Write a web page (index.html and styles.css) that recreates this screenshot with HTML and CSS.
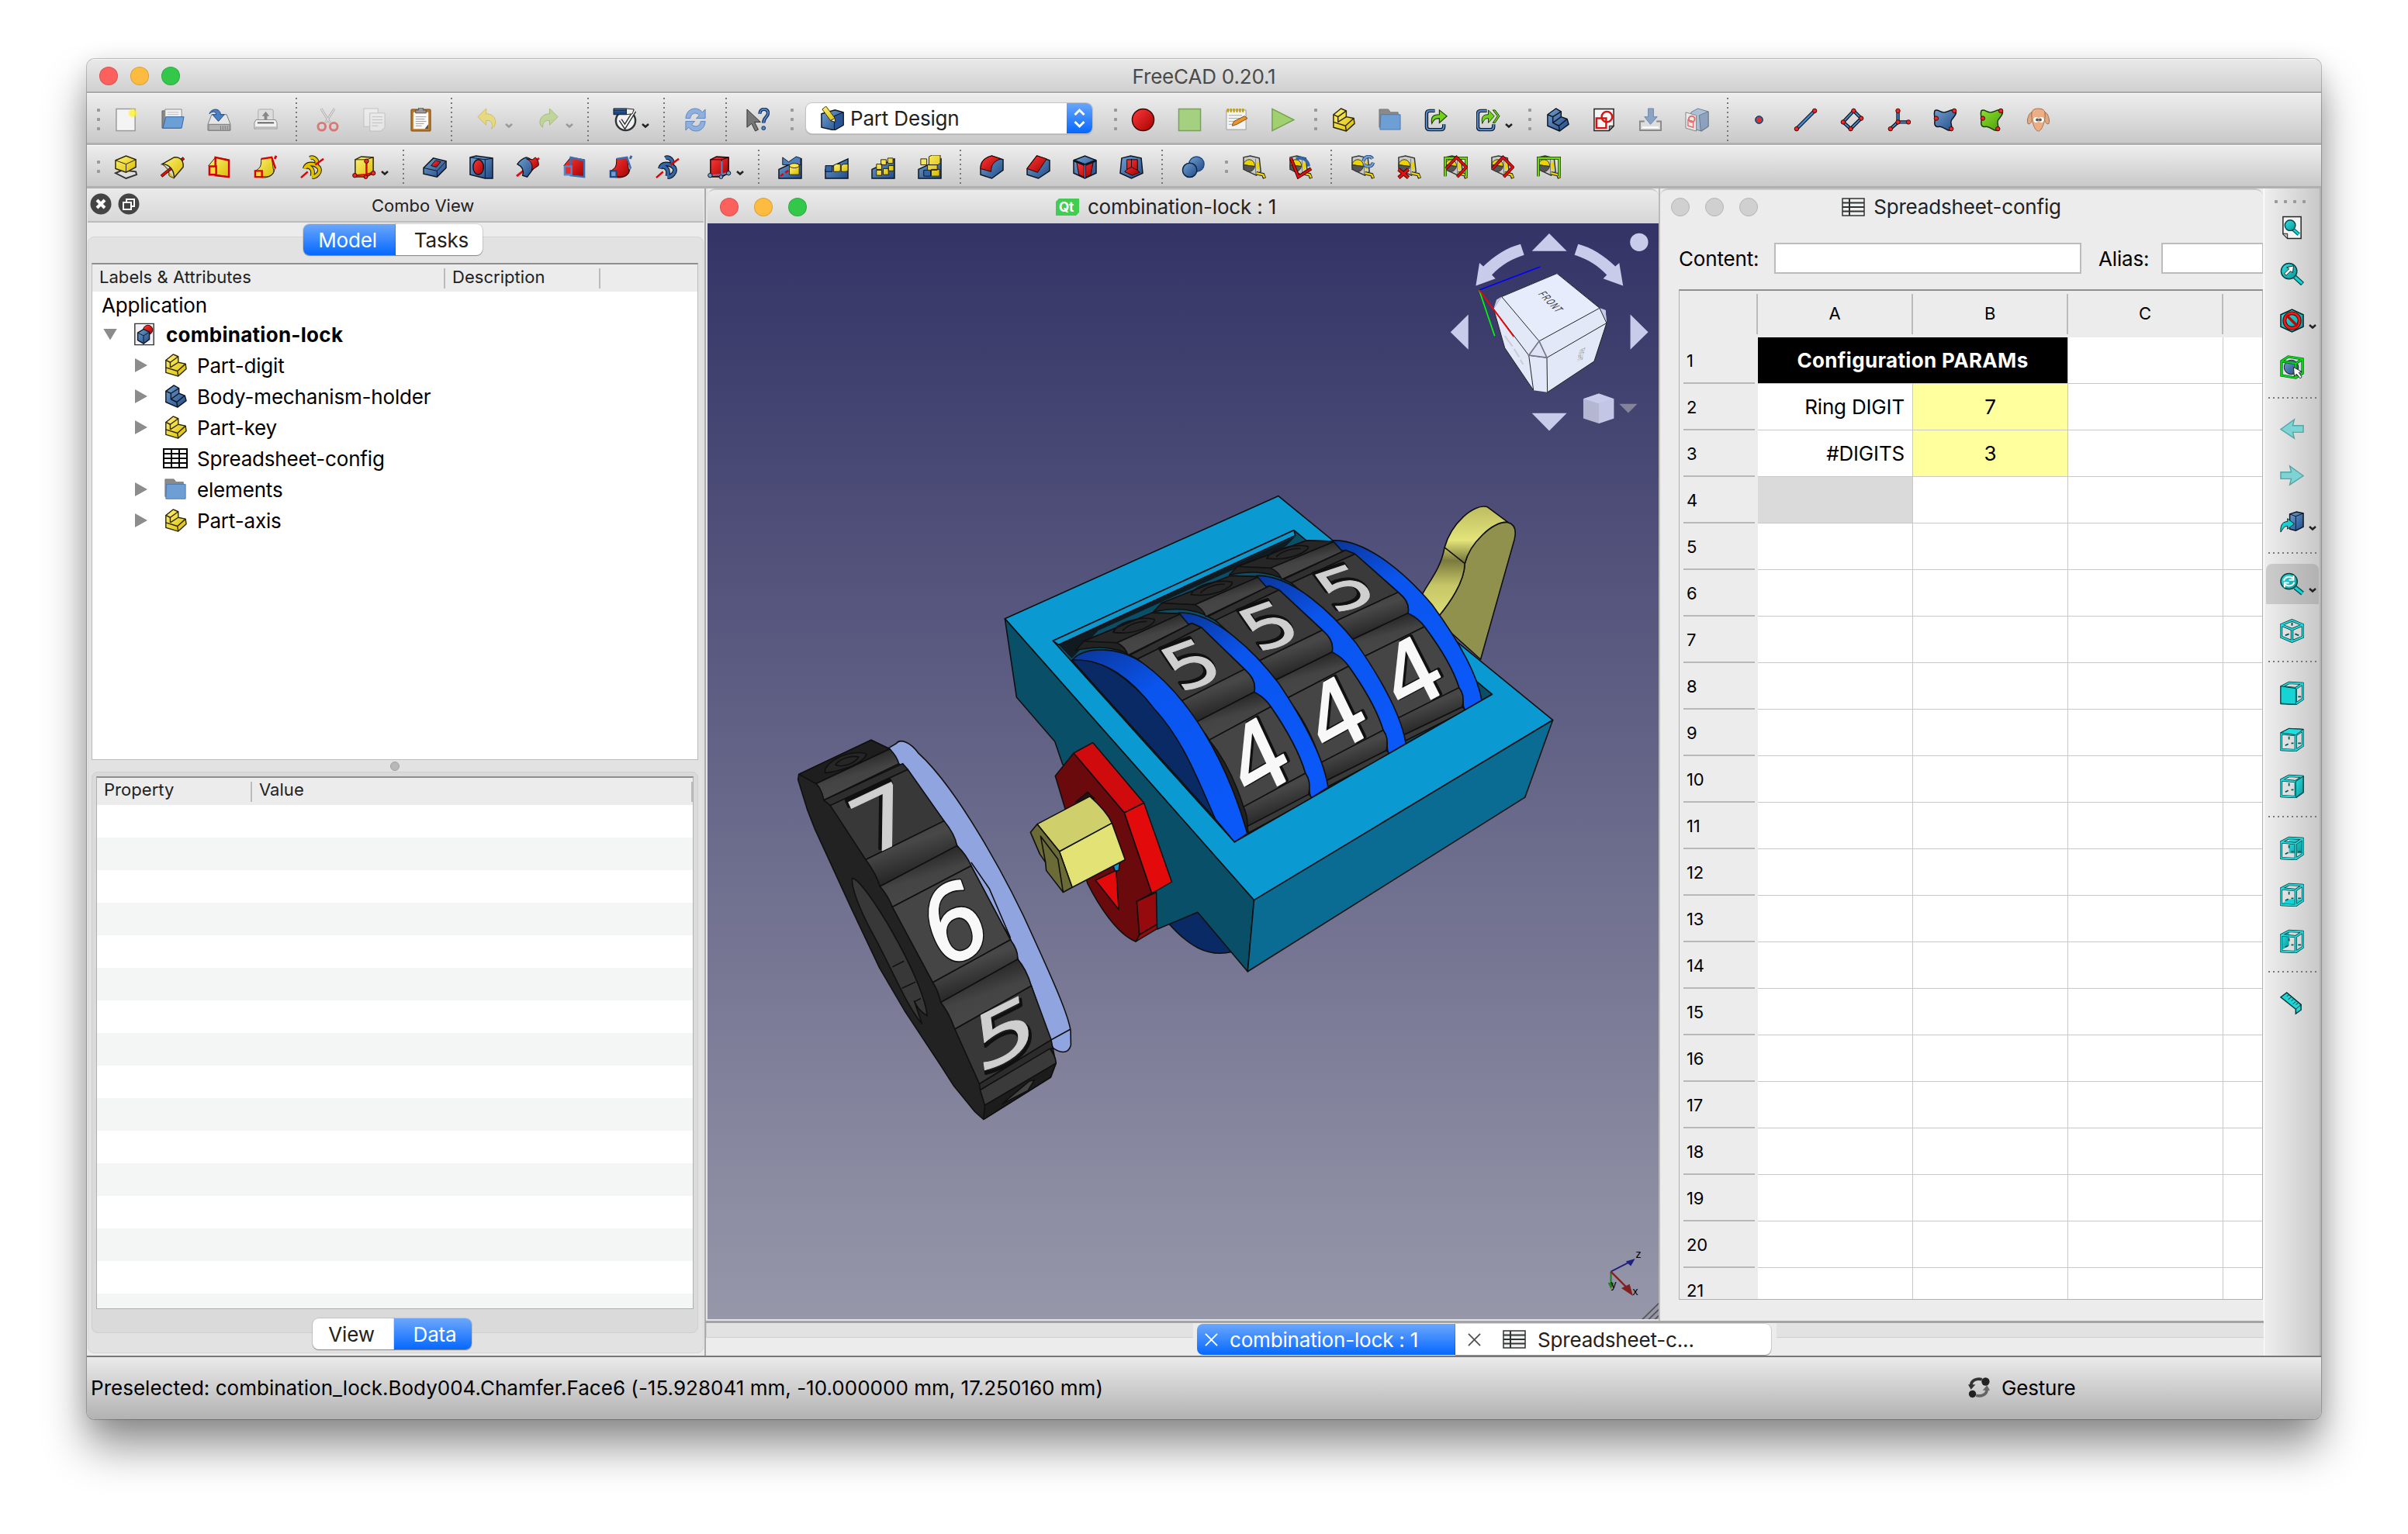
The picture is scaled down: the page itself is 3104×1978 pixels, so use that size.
FILE: index.html
```html
<!DOCTYPE html>
<html lang="en">
<head>
<meta charset="utf-8">
<title>FreeCAD 0.20.1</title>
<link rel="stylesheet" href="styles.css">
</head>
<body>
<svg class="defs" width="0" height="0" aria-hidden="true">
<defs>
<linearGradient id="gy" x1="0" y1="0" x2="1" y2="1"><stop offset="0" stop-color="#fff27a"/><stop offset="1" stop-color="#d9bd00"/></linearGradient>
<linearGradient id="gb" x1="0" y1="0" x2="1" y2="1"><stop offset="0" stop-color="#729fcf"/><stop offset="1" stop-color="#204a87"/></linearGradient>
<linearGradient id="gr" x1="0" y1="0" x2="1" y2="1"><stop offset="0" stop-color="#ff3a3a"/><stop offset="1" stop-color="#a40000"/></linearGradient>
<linearGradient id="gg" x1="0" y1="0" x2="1" y2="1"><stop offset="0" stop-color="#8ae234"/><stop offset="1" stop-color="#4e9a06"/></linearGradient>
<linearGradient id="gc" x1="0" y1="0" x2="1" y2="1"><stop offset="0" stop-color="#34e0e2"/><stop offset="1" stop-color="#06989a"/></linearGradient>
<radialGradient id="glow"><stop offset="0" stop-color="#fff84a"/><stop offset=".5" stop-color="#fff02a" stop-opacity=".8"/><stop offset="1" stop-color="#fff02a" stop-opacity="0"/></radialGradient>
<linearGradient id="cylA" x1="0" y1="0" x2=".45" y2="1"><stop offset="0" stop-color="#3a3a3a"/><stop offset=".45" stop-color="#484848"/><stop offset="1" stop-color="#1c1c1c"/></linearGradient>
<linearGradient id="cylB" x1="0" y1="0" x2=".45" y2="1"><stop offset=".2" stop-color="#1e1e1e"/><stop offset=".6" stop-color="#444"/><stop offset="1" stop-color="#484848"/></linearGradient>
<linearGradient id="rim" x1="0" y1="0" x2=".6" y2="1"><stop offset="0" stop-color="#0a3596"/><stop offset=".35" stop-color="#0a55ee"/><stop offset="1" stop-color="#0a58f8"/></linearGradient>
<linearGradient id="lever" x1="0" y1="0" x2="0" y2="1"><stop offset="0" stop-color="#bcbc62"/><stop offset=".3" stop-color="#e4e47a"/><stop offset=".48" stop-color="#7a7a3e"/><stop offset=".7" stop-color="#c6c668"/><stop offset="1" stop-color="#e0e078"/></linearGradient>

<symbol id="new" viewBox="0 0 32 32"><rect x="3" y="1.500" width="25" height="29" fill="#f4f4f4" stroke="#999" stroke-width="1.500"/><circle cx="25" cy="7" r="7" fill="url(#glow)"/></symbol>
<symbol id="open" viewBox="0 0 32 32"><path d="M2 4h8l3 3h13v20H2z" fill="#888" stroke="#666"/><path d="M6 2h22v14H6z" fill="#f2f2f2" stroke="#888"/><path d="M9 6h15M9 9h15" stroke="#bbb" fill="none"/><path d="M7 12h24l-3 15H3z" fill="#6b9fd8" stroke="#3465a4"/></symbol>
<symbol id="save" viewBox="0 0 32 32"><path d="M6 9h20l5 13v8H1v-8z" fill="#e6e6e6" stroke="#777"/><path d="M2 22h28v8H2z" fill="#b5b5b5" stroke="#777"/><path d="M18 24v5M21 24v5M24 24v5M27 24v5" stroke="#777"/><path d="M3 8C5 1 17-1 18 9h5l-8 9-8-9h5C12 5 7 4 3 8z" fill="#4a7fc0" stroke="#204a87"/></symbol>
<symbol id="print" viewBox="0 0 32 32"><rect x="6" y="2" width="20" height="15" rx="2" fill="#ddd" stroke="#aaa"/><path d="M16 5l5 6h-3v5h-4v-5h-3z" fill="#888"/><path d="M3 16h26l2 4v8H1v-8z" fill="#f2f2f2" stroke="#888"/><path d="M5 20h22" stroke="#555" stroke-width="2"/><path d="M2 25h28v4H2z" fill="#bbb"/></symbol>
<symbol id="cut" viewBox="0 0 32 32"><g fill="none" opacity=".65"><path d="M7 1l12 19M25 1L13 20" stroke="#999" stroke-width="3"/><path d="M7 1l12 19M25 1L13 20" stroke="#fff"/><ellipse cx="8" cy="25" rx="5" ry="5" stroke="#dd4444" stroke-width="3"/><ellipse cx="24" cy="25" rx="5" ry="5" stroke="#dd4444" stroke-width="3"/></g></symbol>
<symbol id="copy" viewBox="0 0 32 32"><g opacity=".55" fill="#f4f4f4" stroke="#aaa"><path d="M2 1h19v24H2z"/><path d="M10 7h20v19l-5 5H10z"/><path d="M13 12h14M13 16h14M13 20h14M13 24h8" fill="none"/></g></symbol>
<symbol id="paste" viewBox="0 0 32 32"><rect x="3" y="2" width="26" height="29" rx="1" fill="#b5762a" stroke="#7a4a10"/><path d="M6 6h20v22H6z" fill="#fafafa"/><path d="M9 12h14M9 15h12M9 18h14M9 21h11M9 24h8" stroke="#999"/><path d="M21 28l5-6v6z" fill="#555"/><path d="M9 3h4V0h6v3h4v4H9z" fill="#999" stroke="#555"/></symbol>
<symbol id="undo" viewBox="0 0 32 32"><path d="M2 12L13 1v7c14 0 16 15 7 20 3-7 0-12-7-11v6z" fill="#ead96a" stroke="#c9b64c" opacity=".8"/></symbol>
<symbol id="redo" viewBox="0 0 32 32"><path d="M28 12L17 1v7C3 8 1 23 8 26c-1-6 3-10 9-9v6z" fill="#bcd490" stroke="#98b868" opacity=".85"/></symbol>
<symbol id="valid" viewBox="0 0 32 32"><ellipse cx="17" cy="17" rx="13" ry="13" fill="#f2f2f2" stroke="#2e3436" stroke-width="2.500"/><path d="M10 16l6 9L29 4" fill="none" stroke="#2e3436" stroke-width="5"/><path d="M10 16l6 9L29 4" fill="none" stroke="#fff" stroke-width="2"/><path d="M1 1h17v8H1z" fill="#3465a4" stroke="#0b1521"/><path d="M1 4h17M1 7h17" stroke="#0b1521"/><path d="M18 1l10 1-2 6-8 1z" fill="#eee" stroke="#222"/></symbol>
<symbol id="sync" viewBox="0 0 32 32"><g fill="#8fb0dc" stroke="#5d86c0"><path d="M3 14C4-1 20-2 25 6l4-4v12H17l4-4c-4-5-11-3-12 4z"/><path d="M29 18c-1 15-17 16-22 8l-4 4V18h12l-4 4c4 5 11 3 12-4z"/></g></symbol>
<symbol id="whats" viewBox="0 0 32 32"><path d="M2 2v24l6-5 5 10 4-2-5-10h8z" fill="#777" stroke="#333"/><path d="M19 8c0-8 11-8 11-1 0 5-6 6-6 13" fill="none" stroke="#14325c" stroke-width="4.500"/><path d="M19 8c0-8 11-8 11-1 0 5-6 6-6 13" fill="none" stroke="#5588c8" stroke-width="2"/><circle cx="24" cy="27" r="2.500" fill="#5588c8" stroke="#14325c"/></symbol>
<symbol id="pd" viewBox="0 0 32 32"><path d="M2 10l18-5 11 3v17l-12 7-17-4z" fill="url(#gb)" stroke="#0b1521" stroke-width="1.500"/><path d="M19 13l12-5v17l-12 7z" fill="#2a5596" stroke="#0b1521"/><path d="M3 4l5-4 12 16v5l-6-2z" fill="url(#gy)" stroke="#3a3000"/><path d="M14 19l6 2v-5z" fill="#fff" stroke="#222"/></symbol>
<symbol id="rec" viewBox="0 0 32 32"><circle cx="16" cy="16" r="14.500" fill="url(#gr)" stroke="#3a0505" stroke-width="1.500"/></symbol>
<symbol id="stop" viewBox="0 0 32 32"><path d="M1.500 1.500h29v29h-29z" fill="#a5d080" stroke="#7a9e5c" stroke-width="1.500"/></symbol>
<symbol id="note" viewBox="0 0 32 32"><path d="M3 3h26v26H3z" fill="#f4f4f4" stroke="#999"/><path d="M5 1v5M9 1v5M13 1v5M17 1v5M21 1v5M25 1v5" stroke="#c4a000" stroke-width="2.500"/><path d="M6 10h18M6 14h18M6 18h12M6 22h10" stroke="#aaa"/><path d="M11 22l2-4 14-7 4 3-14 8-6 2z" fill="#e8952c" stroke="#7a4a10"/></symbol>
<symbol id="play" viewBox="0 0 32 32"><path d="M2 1.500L31 16 2 30.500z" fill="#a0d070" stroke="#74a24c" stroke-width="1.500"/></symbol>
<symbol id="part" viewBox="0 0 32 32"><g stroke="#2b2500" stroke-width="1.500" stroke-linejoin="round" fill="url(#gy)"><path d="M3 9l10-8 7 3v8l10 2 1 7-11 10-17-5z"/><path d="M3 9l6 3 11-8M9 12v7M3 19l16 5 11-10M19 24l1 7M9 19l11-7" fill="none"/></g></symbol>
<symbol id="body" viewBox="0 0 32 32"><g stroke="#0b1521" stroke-width="1.500" stroke-linejoin="round" fill="url(#gb)"><path d="M3 9l11-8 7 4v7l8 3 2 7-12 9-16-7z"/><path d="M3 9l7 3 11-7M10 12v8l8 4 11-9M18 24l1 7M10 20l11-8" fill="none"/></g></symbol>
<symbol id="folder" viewBox="0 0 32 32"><path d="M2 2h12l3 4h10v20H2z" fill="#8a8a8a" stroke="#777"/><path d="M4 9h26v20H3z" fill="#6d9fd4" stroke="#4a7ab4"/></symbol>
<symbol id="link" viewBox="0 0 32 32"><path d="M14 4H7c-3 0-4 2-4 4v17c0 3 2 4 4 4h15c3 0 4-2 4-4v-3" fill="none" stroke="#0b1521" stroke-width="4.500"/><path d="M14 4H7c-3 0-4 2-4 4v17c0 3 2 4 4 4h15c3 0 4-2 4-4v-3" fill="none" stroke="#5588c8" stroke-width="2.200"/><path d="M10 21C8 11 13 9 20 9V3l10 8-10 9v-6c-5 0-7 1-10 7z" fill="#73d216" stroke="#173a00" stroke-width="1.200"/></symbol>
<symbol id="links" viewBox="0 0 32 32"><path d="M14 4H6C3 4 2 6 2 8v17c0 3 2 4 4 4h13c3 0 4-2 4-4v-3" fill="none" stroke="#0b1521" stroke-width="4.500"/><path d="M14 4H6C3 4 2 6 2 8v17c0 3 2 4 4 4h13c3 0 4-2 4-4v-3" fill="none" stroke="#5588c8" stroke-width="2.200"/><path d="M8 21C6 11 10 9 16 9V3l8 8-8 9v-6c-4 0-5 1-8 7zM22 3h3l6 8-6 9h-3l6-9z" fill="#73d216" stroke="#173a00"/></symbol>
<symbol id="sketch" viewBox="0 0 32 32"><path d="M3 1.500h26v23l-6 6H3z" fill="#f6f6f6" stroke="#222" stroke-width="1.500"/><path d="M23 30v-6h6z" fill="#888" stroke="#222"/><path d="M6 14h13v13H6z" fill="none" stroke="#e01010" stroke-width="2.500"/><circle cx="20" cy="12" r="7" fill="none" stroke="#e01010" stroke-width="2.500"/></symbol>
<symbol id="import" viewBox="0 0 32 32"><path d="M8 18H2v12h28V18h-6" fill="#ddd" stroke="#888" stroke-width="2"/><path d="M5 26h22" stroke="#fff" stroke-width="2"/><path d="M13 1h7v11h5l-9 10-8-10h5z" fill="#8ba4c6" stroke="#6c86aa"/></symbol>
<symbol id="map" viewBox="0 0 32 32"><g opacity=".65"><path d="M8 6l9-5 14 4v20l-9 6-14-4z" fill="#8fb0d8" stroke="#345"/><path d="M19 10l12-5v20l-10 6z" fill="#6485b0" stroke="#345"/><path d="M1 6l14 4v21L1 27z" fill="#f4f4f4" stroke="#555"/><circle cx="9" cy="15" r="4" fill="none" stroke="#e33" stroke-width="2"/><path d="M4 16l7 2v8l-7-2z" fill="none" stroke="#e33" stroke-width="1.500"/></g></symbol>
<symbol id="pt" viewBox="0 0 32 32"><circle cx="16" cy="16" r="5" fill="#3465a4" stroke="#0b1521"/><circle cx="16" cy="16" r="3.200" fill="#ef2929"/></symbol>
<symbol id="ln" viewBox="0 0 32 32"><path d="M4 28L28 4" stroke="#0b1521" stroke-width="5"/><path d="M4 28L28 4" stroke="#4f86c6" stroke-width="2.500"/><g fill="#ef2929" stroke="#400"><circle cx="4" cy="28" r="2.800"/><circle cx="28" cy="4" r="2.800"/></g></symbol>
<symbol id="pl" viewBox="0 0 32 32"><path d="M18 4L4 19l10 9 14-14z" fill="none" stroke="#0b1521" stroke-width="4.500"/><path d="M18 4L4 19l10 9 14-14z" fill="none" stroke="#4f86c6" stroke-width="2"/><g fill="#ef2929" stroke="#400"><circle cx="18" cy="4" r="2.800"/><circle cx="4" cy="19" r="2.800"/><circle cx="14" cy="28" r="2.800"/><circle cx="28" cy="14" r="2.800"/></g></symbol>
<symbol id="cs" viewBox="0 0 32 32"><path d="M15 4v15L5 28M15 19h14" fill="none" stroke="#0b1521" stroke-width="4.500"/><path d="M15 4v15L5 28M15 19h14" fill="none" stroke="#4f86c6" stroke-width="2"/><g fill="#ef2929" stroke="#400"><circle cx="15" cy="4" r="2.800"/><circle cx="15" cy="19" r="2.800"/><circle cx="5" cy="28" r="2.800"/><circle cx="29" cy="19" r="2.800"/></g></symbol>
<symbol id="sb" viewBox="0 0 32 32"><path d="M2 4c3-3 6 1 11 2 6 1 9-5 17-3 2 6-3 9-6 14-2 5 3 9 0 13-6 2-10-6-16-5-4 1-7-1-6-7 1-4-2-9 0-14z" fill="url(#gb)" stroke="#0b1521" stroke-width="1.500"/><g fill="#ef2929" stroke="#400"><circle cx="28" cy="4" r="2.800"/><circle cx="4" cy="14" r="2.800"/><circle cx="24" cy="28" r="2.800"/></g></symbol>
<symbol id="sg" viewBox="0 0 32 32"><path d="M2 4c3-3 6 1 11 2 6 1 9-5 17-3 2 6-3 9-6 14-2 5 3 9 0 13-6 2-10-6-16-5-4 1-7-1-6-7 1-4-2-9 0-14z" fill="url(#gg)" stroke="#173a00" stroke-width="1.500"/><g fill="#ef2929" stroke="#400"><circle cx="28" cy="4" r="2.800"/><circle cx="4" cy="14" r="2.800"/><circle cx="24" cy="28" r="2.800"/></g></symbol>
<symbol id="sheep" viewBox="0 0 32 32"><path d="M7 6C4 6 0 16 2 21c3 2 5-2 6-6zM25 6c3 0 7 10 5 15-3 2-5-2-6-6z" fill="#dfa882" stroke="#a07050"/><path d="M8 4c3-4 13-4 16 0 3 7-2 27-8 27S5 11 8 4z" fill="#ecae84" stroke="#a07050"/><circle cx="13" cy="16" r="3.500" fill="#fff"/><circle cx="20" cy="16" r="3.500" fill="#fff"/><circle cx="14.500" cy="16" r="2" fill="#555"/><circle cx="18.500" cy="16" r="2" fill="#555"/></symbol>

<symbol id="pad" viewBox="0 0 32 32"><path d="M2 24l9-4 18 2 1 4-14 5z" fill="#ddd" stroke="#333" stroke-width="2"/><path d="M2 7l14-6 13 5v10l-13 7-14-5z" fill="url(#gy)" stroke="#2b2500" stroke-width="1.500"/><path d="M2 7l14 5 13-6M16 12v11" fill="none" stroke="#2b2500"/></symbol>
<symbol id="rev" viewBox="0 0 32 32"><path d="M1 28L31 4" stroke="#400" stroke-width="4"/><path d="M1 28L31 4" stroke="#e01010" stroke-width="2.500"/><path d="M2 12l16-9c7-1 13 3 12 13l-12 14c0-10-6-18-16-18z" fill="url(#gy)" stroke="#2b2500" stroke-width="1.500"/><path d="M18 30c-3 0-5-1-7-3 1-7-3-11-9-15" fill="#d9bd00" stroke="#2b2500"/></symbol>
<symbol id="loft" viewBox="0 0 32 32"><path d="M2 14L11 3l18 3v23l-18-3z" fill="url(#gy)" stroke="#2b2500"/><path d="M11 3l18 4v22l-18-2z" fill="none" stroke="#c00" stroke-width="2.500"/><path d="M3 15h9v11H3z" fill="#ffd93b" stroke="#d00" stroke-width="2.500"/></symbol>
<symbol id="pipe" viewBox="0 0 32 32"><path d="M10 5l14-2 2 15c3 6-2 11-12 12l-12-1v-8c8-4 8-8 8-16z" fill="url(#gy)" stroke="#2b2500"/><path d="M10 5l14-2 5 15" fill="none" stroke="#d00" stroke-width="2.500"/><path d="M10 28c10 3 17-2 18-10" fill="none" stroke="#2b2500"/><path d="M2 21h9v8H2z" fill="#ffd93b" stroke="#d00" stroke-width="2.500"/><path d="M30 1l-2 4" stroke="#d00" stroke-width="3"/></symbol>
<symbol id="helix" viewBox="0 0 32 32"><path d="M13 4c5-3 12 4 8 9M6 18c2-8 13-8 19-1 3 6-4 12-9 12M8 15c7 0 10 5 8 13" fill="none" stroke="#2b2500" stroke-width="6"/><path d="M13 4c5-3 12 4 8 9M6 18c2-8 13-8 19-1 3 6-4 12-9 12M8 15c7 0 10 5 8 13" fill="none" stroke="#e0c400" stroke-width="3.800"/><path d="M1 30l9-8M20 13L31 5" stroke="#d00" stroke-width="2.500"/></symbol>
<symbol id="prim" viewBox="0 0 32 32"><path d="M4 6l8-4 16 1v21l-9 5H4z" fill="url(#gy)" stroke="#2b2500" stroke-width="1.500"/><path d="M4 6h15l9-3M19 6v23" stroke="#2b2500" fill="none"/><path d="M19 8v18L4 27M19 26l9-3" stroke="#d00" stroke-width="2.500" fill="none"/><g fill="#ef2929" stroke="#400"><circle cx="19" cy="8" r="2.800"/><circle cx="3.500" cy="27" r="2.800"/><circle cx="18" cy="29" r="2.500"/><circle cx="28" cy="24" r="2.800"/></g></symbol>
<symbol id="pocket" viewBox="0 0 32 32"><path d="M1 17L14 4l17 4v9L19 29 1 25z" fill="url(#gb)" stroke="#0b1521" stroke-width="1.500"/><path d="M1 17l18 4L31 8M19 21v8" fill="none" stroke="#0b1521"/><path d="M11 14l6-7 7 2-6 7z" fill="url(#gr)" stroke="#0b1521"/></symbol>
<symbol id="hole" viewBox="0 0 32 32"><path d="M1 3l8-2 22 3v27L21 31 1 26z" fill="url(#gb)" stroke="#0b1521" stroke-width="1.500"/><path d="M1 3l20 3v25M21 6l10-2" fill="none" stroke="#0b1521"/><ellipse cx="12" cy="16" rx="7" ry="10" fill="url(#gr)" stroke="#0b1521" stroke-width="1.500"/></symbol>
<symbol id="groove" viewBox="0 0 32 32"><path d="M1 28L31 4" stroke="#e01010" stroke-width="3"/><path d="M2 12C6 6 10 4 14 3c8 2 12 8 10 14l-9 12-6-2c2-7-1-12-7-15z" fill="url(#gb)" stroke="#0b1521" stroke-width="1.500"/><path d="M14 5c6 2 9 8 7 15l9-6c1-4-1-8-4-11l-4 3z" fill="url(#gr)" stroke="#200"/></symbol>
<symbol id="loftr" viewBox="0 0 32 32"><path d="M2 14L11 3l18 3v23l-18-3z" fill="url(#gr)" stroke="#200"/><path d="M11 3l18 4v22l-18-2z" fill="none" stroke="#3a70b5" stroke-width="2.500"/><path d="M3 15h9v11H3z" fill="#ef2929" stroke="#5588c8" stroke-width="2.500"/></symbol>
<symbol id="piper" viewBox="0 0 32 32"><path d="M10 5l14-2 2 15c3 6-2 11-12 12l-12-1v-8c8-4 8-8 8-16z" fill="url(#gr)" stroke="#200"/><path d="M10 5l14-2 5 15" fill="none" stroke="#3a70b5" stroke-width="2.500"/><path d="M10 28c10 3 17-2 18-10" fill="none" stroke="#200"/><path d="M2 21h8v8H2z" fill="#729fcf" stroke="#204a87" stroke-width="2.500"/><path d="M30 1l-2 4" stroke="#3465a4" stroke-width="3"/></symbol>
<symbol id="helixb" viewBox="0 0 32 32"><path d="M13 4c5-3 12 4 8 9M6 18c2-8 13-8 19-1 3 6-4 12-9 12M8 15c7 0 10 5 8 13" fill="none" stroke="#0b1521" stroke-width="6"/><path d="M13 4c5-3 12 4 8 9M6 18c2-8 13-8 19-1 3 6-4 12-9 12M8 15c7 0 10 5 8 13" fill="none" stroke="#3465a4" stroke-width="3.800"/><path d="M1 30l9-8M20 13L31 5" stroke="#d00" stroke-width="2.500"/></symbol>
<symbol id="primr" viewBox="0 0 32 32"><path d="M4 6l8-4 16 1v21l-9 5H4z" fill="url(#gr)" stroke="#200" stroke-width="1.500"/><path d="M4 6h15l9-3M19 6v23" stroke="#200" fill="none"/><path d="M19 8v18L4 27M19 26l9-3" stroke="#5588c8" stroke-width="2" fill="none"/><g fill="#729fcf" stroke="#0b1521"><circle cx="3.500" cy="27" r="2.800"/><circle cx="18" cy="29" r="2.500"/><circle cx="28" cy="24" r="2.800"/></g></symbol>
<symbol id="base" viewBox="0 0 32 32"><path d="M1 19L31 5v26H1z" fill="url(#gb)" stroke="#0b1521" stroke-width="1.500"/></symbol>
<symbol id="mirror" viewBox="0 0 32 32"><use href="#base"/><path d="M6 3l8 6 10-7 6 2v9H6z" fill="#4a7fc0" stroke="#0b1521"/><path d="M3 28L30 9" stroke="#d00" stroke-width="2.500" stroke-dasharray="5 3"/><path d="M15 14h13v12H15z" fill="url(#gy)" stroke="#2b2500"/><ellipse cx="21.500" cy="14" rx="6.500" ry="3" fill="#fce94f" stroke="#2b2500"/></symbol>
<symbol id="lpat" viewBox="0 0 32 32"><use href="#base"/><path d="M1 14h9v8H1z" fill="#3465a4" stroke="#0b1521"/><path d="M12 14l3-2h6v8l-2 2h-7zM22 14l3-2h6v8l-2 2h-7z" fill="url(#gy)" stroke="#2b2500"/></symbol>
<symbol id="ppat" viewBox="0 0 32 32"><use href="#base"/><g fill="url(#gy)" stroke="#2b2500"><path d="M13 6h7v7h-7zM22 4h7v7h-7zM7 12h7v7H7zM23 14h7v7h-7zM7 20h7v7H7zM16 18h7v8h-7z"/></g></symbol>
<symbol id="mpat" viewBox="0 0 32 32"><use href="#base"/><path d="M8 20h9v8H8z" fill="#3465a4" stroke="#0b1521"/><g fill="url(#gy)" stroke="#2b2500"><path d="M4 5h8v8H4zM15 2l4-2h11v10l-3 3H15zM13 13h13v7H13zM18 19h11v9H18z"/></g></symbol>
<symbol id="fillet" viewBox="0 0 32 32"><path d="M1 18C1 8 8 3 16 1l15 5v14L16 31 1 26z" fill="url(#gb)" stroke="#0b1521" stroke-width="1.500"/><path d="M1 18C1 8 8 3 16 1l12 4C18 8 15 14 15 22z" fill="url(#gr)" stroke="#200"/></symbol>
<symbol id="chamfer" viewBox="0 0 32 32"><path d="M1 18L14 1l17 6v14L16 31 1 26z" fill="url(#gb)" stroke="#0b1521" stroke-width="1.500"/><path d="M1 18L14 1l13 4-12 18z" fill="url(#gr)" stroke="#200"/></symbol>
<symbol id="draft" viewBox="0 0 32 32"><path d="M1 7l15-6 15 6v17l-15 7-15-7z" fill="url(#gb)" stroke="#0b1521" stroke-width="1.500"/><path d="M5 9l11 4 11-4-3 17-8 4-8-4z" fill="url(#gr)" stroke="#200"/><path d="M1 7l15 6 15-6M16 13v18" fill="none" stroke="#0b1521" stroke-width="3"/><path d="M16 13v17" stroke="#729fcf"/></symbol>
<symbol id="thick" viewBox="0 0 32 32"><path d="M3 4l12-3 14 3 2 20-15 7-15-7z" fill="url(#gb)" stroke="#0b1521" stroke-width="1.500"/><path d="M10 6h14v14l3 3-10 4-10-5 3-3z" fill="url(#gr)" stroke="#200"/><path d="M10 19l6-3 8 4M16 5v11" stroke="#200" fill="none"/></symbol>
<symbol id="bool" viewBox="0 0 32 32"><circle cx="20" cy="12" r="10" fill="url(#gb)" stroke="#204a87" stroke-width="1.500"/><circle cx="11" cy="20" r="9.500" fill="url(#gb)" stroke="#0b2545" stroke-width="1.500"/></symbol>
<symbol id="tape" viewBox="0 0 32 32"><path d="M2 3l9-2 12 3 2 18-6 5-17-8z" fill="#c9cbc6" stroke="#333" stroke-width="1.500"/><path d="M2 13a7.500 8 0 0 1 15 2z" fill="#edd400" stroke="#333"/><path d="M2 13a7.500 8 0 0 0 15 2z" fill="#555" stroke="#333"/><path d="M18 5v21" stroke="#777"/><path d="M21 9v10" stroke="#edd400" stroke-width="3"/><path d="M19 24l9 2 2 5" stroke="#222" stroke-width="4.500" fill="none"/><path d="M19 24l9 2 2 4" stroke="#edd400" stroke-width="2.500" fill="none"/></symbol>
<symbol id="tangle" viewBox="0 0 32 32"><use href="#tape"/><path d="M3 4l10 25 17-11" fill="none" stroke="#400" stroke-width="4.500"/><path d="M3 4l10 25 17-11" fill="none" stroke="#e01010" stroke-width="2.500"/><path d="M10 5c10-4 16 3 17 10" fill="none" stroke="#3465a4" stroke-width="4"/></symbol>
<symbol id="tref" viewBox="0 0 32 32"><use href="#tape"/><path d="M17 8c2-8 10-7 12-3M30 10c-2 7-10 6-12 2" fill="none" stroke="#204a87" stroke-width="4.500"/><path d="M17 8c2-8 10-7 12-3M30 10c-2 7-10 6-12 2" fill="none" stroke="#729fcf" stroke-width="2.500"/></symbol>
<symbol id="tdel" viewBox="0 0 32 32"><use href="#tape"/><path d="M2 19l13 11M15 19L2 30" stroke="#400" stroke-width="5"/><path d="M2 19l13 11M15 19L2 30" stroke="#e01010" stroke-width="3"/></symbol>
<symbol id="tall" viewBox="0 0 32 32"><use href="#tape"/><path d="M2 28V4h28v24" fill="none" stroke="#173a00" stroke-width="4"/><path d="M2 28V4h28v24" fill="none" stroke="#73d216" stroke-width="2.500"/><path d="M3 18L17 3l13 13-12 13" fill="none" stroke="#400" stroke-width="4"/><path d="M3 18L17 3l13 13-12 13" fill="none" stroke="#e01010" stroke-width="2.500"/></symbol>
<symbol id="t3d" viewBox="0 0 32 32"><use href="#tape"/><path d="M3 18L17 3l13 13-12 13" fill="none" stroke="#400" stroke-width="4"/><path d="M3 18L17 3l13 13-12 13" fill="none" stroke="#e01010" stroke-width="2.500"/></symbol>
<symbol id="tdelta" viewBox="0 0 32 32"><use href="#tape"/><path d="M2 28V4h28v24" fill="none" stroke="#173a00" stroke-width="4"/><path d="M2 28V4h28v24" fill="none" stroke="#73d216" stroke-width="2.500"/></symbol>

<symbol id="fitall" viewBox="0 0 32 32"><path d="M4 1.500h24v29H10l-6-6z" fill="#f4f4f4" stroke="#222" stroke-width="1.500"/><path d="M4 24h6v6" fill="#bbb" stroke="#222"/><path d="M16 17l9 8" stroke="#066" stroke-width="5"/><path d="M16 17l9 8" stroke="#16d0d2" stroke-width="2.500"/><circle cx="13.500" cy="13" r="7" fill="url(#gc)" stroke="#044" stroke-width="1.500"/></symbol>
<symbol id="fitsel" viewBox="0 0 32 32"><path d="M19 19l11 10" stroke="#044" stroke-width="6"/><path d="M19 19l10.500 9.500" stroke="#16d0d2" stroke-width="3.500"/><circle cx="12" cy="12" r="10.500" fill="url(#gc)" stroke="#044" stroke-width="1.500"/><path d="M6 15l6-6-3-2 9-2-1 9-3-2-6 6z" fill="#fff" stroke="#222"/></symbol>
<symbol id="style" viewBox="0 0 32 32"><path d="M1 8l15-7 15 7v16l-15 7-15-7z" fill="url(#gc)" stroke="#022" stroke-width="1.500"/><circle cx="16" cy="16" r="10" fill="none" stroke="#300" stroke-width="5"/><circle cx="16" cy="16" r="10" fill="none" stroke="#ef1a1a" stroke-width="3"/><path d="M9 9l14 14" stroke="#c00" stroke-width="3.500"/></symbol>
<symbol id="bsel" viewBox="0 0 32 32"><circle cx="15" cy="16" r="9.500" fill="url(#gb)" stroke="#0b1521"/><path d="M2 8l9-6 19 3v19l-9 6-19-3zM2 8l19 3 9-6M21 11v19" fill="none" stroke="#063" stroke-width="3.500"/><path d="M2 8l9-6 19 3v19l-9 6-19-3zM2 8l19 3 9-6M21 11v19" fill="none" stroke="#0ae00a" stroke-width="1.800"/><path d="M18 16l1 12 3-3 5 6 2-2-4-6 4-1z" fill="#fff" stroke="#222"/></symbol>
<symbol id="back" viewBox="0 0 32 32"><path d="M1 16L19 3l-2 8h14v9H17l2 8z" fill="#7ed4d4" stroke="#55a5a5" stroke-width="1.500"/></symbol>
<symbol id="fwd" viewBox="0 0 32 32"><path d="M31 16L13 3l2 8H1v9h14l-2 8z" fill="#7ed4d4" stroke="#55a5a5" stroke-width="1.500"/></symbol>
<symbol id="linksel" viewBox="0 0 32 32"><path d="M13 5l9-3 9 2v18l-10 5-8-2z" fill="url(#gb)" stroke="#0b1521" stroke-width="1.500"/><path d="M13 5l8 3 10-4M21 8v19" fill="none" stroke="#0b1521"/><path d="M1 29c-1-11 4-14 9-14v-4l9 7-9 7v-4c-5 0-6 4-9 8z" fill="#16d0d2" stroke="#022"/></symbol>
<symbol id="vsync" viewBox="0 0 32 32"><path d="M20 20l10 8" stroke="#044" stroke-width="6"/><path d="M20 20l10 8" stroke="#16d0d2" stroke-width="3.500"/><ellipse cx="12" cy="12" rx="11" ry="10.500" fill="url(#gc)" stroke="#044" stroke-width="1.500"/><path d="M5 11c2-6 9-6 12-3M19 13c-2 6-9 6-12 3M18 4v6h-6M6 20v-6h6" fill="none" stroke="#fff" stroke-width="2"/></symbol>
<symbol id="iso" viewBox="0 0 32 32"><g fill="none" stroke-linejoin="round"><path d="M1.500 8L16 2l14.500 6v16L16 30 1.500 24zM1.500 8L16 14l14.500-6M16 14v16" stroke="#033" stroke-width="3.600"/><path d="M1.500 8L16 2l14.500 6v16L16 30 1.500 24zM1.500 8L16 14l14.500-6M16 14v16" stroke="#22d8da" stroke-width="2"/><path d="M16 5v4M7 22l5-2M25 22l-5-2" stroke="#055" stroke-width="2"/></g></symbol>
<symbol id="wire" viewBox="0 0 32 32"><path d="M1.500 8L12 2.500l18.500 1V24L21 30.500l-19.500-1zM1.500 8L21 10l9.500-6.500M21 10v20.500" fill="none" stroke="#033" stroke-width="3.400" stroke-linejoin="round"/><path d="M1.500 8L12 2.500l18.500 1V24L21 30.500l-19.500-1zM1.500 8L21 10l9.500-6.500M21 10v20.500" fill="none" stroke="#22d8da" stroke-width="2"/><path d="M12 12v4M7 24l4-2M15 21h3M24 21h4" stroke="#055" stroke-width="1.800"/></symbol>
<symbol id="vfront" viewBox="0 0 32 32"><use href="#wire"/><path d="M1 7l20 3v21l-20-1z" fill="#16d4d6" stroke="#033"/></symbol>
<symbol id="vtop" viewBox="0 0 32 32"><use href="#wire"/><path d="M1 7L12 1.500l19 1L21 10z" fill="#22dce0" stroke="#033"/></symbol>
<symbol id="vright" viewBox="0 0 32 32"><use href="#wire"/><path d="M21 10l10-7v21l-10 7z" fill="url(#gc)" stroke="#033"/></symbol>
<symbol id="vrear" viewBox="0 0 32 32"><path d="M12 3h18v20H12z" fill="url(#gc)"/><use href="#wire"/></symbol>
<symbol id="vbot" viewBox="0 0 32 32"><path d="M2 28l10-6 18 1-9 7z" fill="#16d4d6"/><use href="#wire"/></symbol>
<symbol id="vleft" viewBox="0 0 32 32"><path d="M2 8l10-6v20L2 28z" fill="url(#gc)"/><use href="#wire"/></symbol>
<symbol id="ruler" viewBox="0 0 32 32"><path d="M1 8l8-6 19 16v7l-7 5v-6z" fill="#1cd6d8" stroke="#033" stroke-width="1.500"/><path d="M21 24l7-6M12 5l-3 2M15 8l-4 3M18 11l-3 2M21 14l-4 3M24 16l-3 2" fill="none" stroke="#033"/></symbol>
<symbol id="doc" viewBox="0 0 32 32"><path d="M3 1.500h26v29H3z" fill="#f2f2f6" stroke="#333" stroke-width="1.500"/><circle cx="21" cy="10" r="6.500" fill="url(#gr)" stroke="#300"/><path d="M7 14l8-5 8 4v10l-8 6-8-5z" fill="url(#gb)" stroke="#0b1521" stroke-width="1.500"/><path d="M7 14l8 4 8-5M15 18v11" fill="none" stroke="#0b1521"/></symbol>
<symbol id="grid" viewBox="0 0 32 26"><path d="M1 1h30v24H1zM1 7h30M1 13h30M1 19h30M11 1v24M21 1v24" fill="#fff" stroke="#000" stroke-width="2"/></symbol>
<symbol id="sheet" viewBox="0 0 30 24"><path d="M1 1h28v22H1z" fill="#f0f1ee" stroke="#333" stroke-width="1.500"/><path d="M1 6.500h28M1 12h28M1 17.500h28M10 1v22" fill="none" stroke="#2e3436" stroke-width="2"/></symbol>
<symbol id="chev" viewBox="0 0 10 8"><path d="M1 2l4 3.500L9 2" fill="none" stroke="currentColor" stroke-width="2.500"/></symbol>
<symbol id="gest" viewBox="0 0 32 32"><path d="M5 14C5 6 13 3 20 5" fill="none" stroke="#333" stroke-width="4"/><path d="M1 12h10l-6 7z" fill="#333"/><circle cx="25" cy="8" r="5.500" fill="#222"/><path d="M27 18c0 8-8 11-15 9" fill="none" stroke="#666" stroke-width="4"/><path d="M31 20H21l6-7z" fill="#666"/><circle cx="7" cy="25" r="5" fill="#222"/></symbol>
</defs>
</svg>

<div class="window">
  <header class="titlebar">
    <div class="lights"><i class="r"></i><i class="y"></i><i class="g"></i></div>
    <div class="title">FreeCAD 0.20.1</div>
  </header>

  <div class="toolbar tb1">
    <span class="grip"></span>
    <b><svg><use href="#new"/></svg></b><b><svg><use href="#open"/></svg></b><b><svg><use href="#save"/></svg></b><b><svg><use href="#print"/></svg></b>
    <span class="sep"></span>
    <b><svg><use href="#cut"/></svg></b><b><svg><use href="#copy"/></svg></b><b><svg><use href="#paste"/></svg></b>
    <span class="sep"></span>
    <b class="dd off"><svg><use href="#undo"/></svg><svg class="chev"><use href="#chev"/></svg></b><b class="dd off"><svg><use href="#redo"/></svg><svg class="chev"><use href="#chev"/></svg></b>
    <span class="sep"></span>
    <b class="dd"><svg><use href="#valid"/></svg><svg class="chev"><use href="#chev"/></svg></b>
    <span class="sep"></span>
    <b><svg><use href="#sync"/></svg></b>
    <span class="sep"></span>
    <b><svg><use href="#whats"/></svg></b>
    <span class="grip"></span>
    <div class="combo"><svg class="wb"><use href="#pd"/></svg><span>Part Design</span><div class="step"><svg viewBox="0 0 32 39"><path d="M10 15l6-6 6 6M10 24l6 6 6-6" fill="none" stroke="#fff" stroke-width="3"/></svg></div></div>
    <span class="grip far"></span>
    <b><svg><use href="#rec"/></svg></b><b><svg><use href="#stop"/></svg></b><b><svg><use href="#note"/></svg></b><b><svg><use href="#play"/></svg></b>
    <span class="grip tight"></span>
    <b><svg><use href="#part"/></svg></b><b><svg><use href="#folder"/></svg></b><b><svg><use href="#link"/></svg></b><b class="dd"><svg><use href="#links"/></svg><svg class="chev"><use href="#chev"/></svg></b>
    <span class="grip tight"></span>
    <b><svg><use href="#body"/></svg></b><b><svg><use href="#sketch"/></svg></b><b><svg><use href="#import"/></svg></b><b><svg><use href="#map"/></svg></b>
    <span class="sep"></span>
    <b><svg><use href="#pt"/></svg></b><b><svg><use href="#ln"/></svg></b><b><svg><use href="#pl"/></svg></b><b><svg><use href="#cs"/></svg></b><b><svg><use href="#sb"/></svg></b><b><svg><use href="#sg"/></svg></b><b><svg><use href="#sheep"/></svg></b>
  </div>

  <div class="toolbar tb2">
    <span class="grip"></span>
    <b><svg><use href="#pad"/></svg></b><b><svg><use href="#rev"/></svg></b><b><svg><use href="#loft"/></svg></b><b><svg><use href="#pipe"/></svg></b><b><svg><use href="#helix"/></svg></b><b class="dd"><svg><use href="#prim"/></svg><svg class="chev"><use href="#chev"/></svg></b>
    <span class="sep"></span>
    <b><svg><use href="#pocket"/></svg></b><b><svg><use href="#hole"/></svg></b><b><svg><use href="#groove"/></svg></b><b><svg><use href="#loftr"/></svg></b><b><svg><use href="#piper"/></svg></b><b><svg><use href="#helixb"/></svg></b><b class="dd"><svg><use href="#primr"/></svg><svg class="chev"><use href="#chev"/></svg></b>
    <span class="sep"></span>
    <b><svg><use href="#mirror"/></svg></b><b><svg><use href="#lpat"/></svg></b><b><svg><use href="#ppat"/></svg></b><b><svg><use href="#mpat"/></svg></b>
    <span class="sep"></span>
    <b><svg><use href="#fillet"/></svg></b><b><svg><use href="#chamfer"/></svg></b><b><svg><use href="#draft"/></svg></b><b><svg><use href="#thick"/></svg></b>
    <span class="sep"></span>
    <b><svg><use href="#bool"/></svg></b>
    <span class="grip tight"></span>
    <b><svg><use href="#tape"/></svg></b><b><svg><use href="#tangle"/></svg></b>
    <span class="sep"></span>
    <b><svg><use href="#tref"/></svg></b><b><svg><use href="#tdel"/></svg></b><b><svg><use href="#tall"/></svg></b><b><svg><use href="#t3d"/></svg></b><b><svg><use href="#tdelta"/></svg></b>
  </div>

  <main class="main">
    <section class="dock">
      <div class="dock-title">
        <svg class="dk" viewBox="0 0 28 28"><circle cx="14" cy="14" r="13.500" fill="#444"/><path d="M9 9l10 10M19 9L9 19" stroke="#fff" stroke-width="4"/></svg>
        <svg class="dk" viewBox="0 0 28 28"><circle cx="14" cy="14" r="13.500" fill="#444"/><path d="M7 12h10v9H7zM11 12V8h10v9h-4" fill="none" stroke="#fff" stroke-width="2"/></svg>
        <span>Combo View</span>
      </div>
      <div class="pane">
        <div class="tabs top"><span class="on">Model</span><span>Tasks</span></div>
        <div class="tree">
          <div class="thead"><span class="c1">Labels &amp; Attributes</span><span class="c2">Description</span><span></span></div>
          <div class="row app">Application</div>
          <div class="row root"><i class="down"></i><svg><use href="#doc"/></svg><span>combination-lock</span></div>
          <div class="row"><i class="right"></i><svg><use href="#part"/></svg><span>Part-digit</span></div>
          <div class="row"><i class="right"></i><svg><use href="#body"/></svg><span>Body-mechanism-holder</span></div>
          <div class="row"><i class="right"></i><svg><use href="#part"/></svg><span>Part-key</span></div>
          <div class="row"><i class="none"></i><svg><use href="#grid"/></svg><span>Spreadsheet-config</span></div>
          <div class="row"><i class="right"></i><svg><use href="#folder"/></svg><span>elements</span></div>
          <div class="row"><i class="right"></i><svg><use href="#part"/></svg><span>Part-axis</span></div>
        </div>
        <div class="split"><i></i></div>
        <div class="propbox">
          <div class="props">
            <div class="phead"><span class="c1">Property</span><span class="c2">Value</span></div>
            <div class="stripes"></div>
          </div>
        </div>
        <div class="tabs bottom"><span>View</span><span class="on">Data</span></div>
      </div>
    </section>

    <section class="mdi">
      <div class="subs">
        <article class="view3d">
          <div class="subtitle">
            <div class="lights"><i class="r"></i><i class="y"></i><i class="g"></i></div>
            <div class="name"><svg viewBox="0 0 30 22"><path d="M4 0h26v18l-4 4H0V4z" fill="#41cd52"/><text x="4" y="17" font-family="Inter, sans-serif" font-weight="700" font-size="17" fill="#fff">Qt</text></svg><span>combination-lock : 1</span></div>
          </div>
          <svg class="scene" viewBox="912 288 1226 1414">
            <defs>
              <g id="wheel" class="ink">
                <path d="M240 520L262 492 445 405 515 408 540 440 575 450 716 648 862 963 868 972 697 1082C640 850 540 660 420 560C360 505 300 505 240 520z" fill="#222"/>
                <path d="M350 497L520 408C535 420 542 430 545 440L380 535C375 520 365 505 350 497z" fill="url(#cylB)"/>
                <path d="M262 492L445 405 520 408 350 497z" fill="#262626"/>
                <path d="M385 535L550 437 575 450 405 547z" fill="#303030"/>
                <path d="M405 547L575 450 690 578 523 675z" fill="#3a3a3a"/>
                <path d="M523 675L690 578C715 605 720 630 716 648L553 745C545 710 535 690 523 675z" fill="url(#cylA)"/>
                <path d="M553 745L716 648C735 655 750 675 760 693L596 795C585 770 570 755 553 745z" fill="url(#cylB)"/>
                <path d="M596 795L760 693C800 760 835 830 852 897L687 1000C665 920 635 850 596 795z" fill="#454545"/>
                <path d="M687 1000L852 897C866 920 864 940 860 962L697 1060C698 1040 695 1020 687 1000z" fill="url(#cylA)"/>
                <path d="M697 1060L860 962 872 972 700 1080z" fill="#3a3a3a"/>
                <path d="M340 465C350 435 410 415 450 425C455 440 400 475 340 465zM365 460C380 440 410 430 430 432" fill="none"/>
                <path d="M515 405C610 400 720 530 780 620C850 740 900 850 912 940L868 972C855 955 872 930 852 897C835 830 800 760 760 693C740 660 725 655 716 648C722 610 700 590 690 578L575 450 550 437 540 440z" fill="url(#rim)"/>
                <text class="shade" transform="matrix(2 -.85 .97 1.670 514 645)">5</text>
                <text class="dg dim" transform="matrix(2 -.85 .97 1.670 519 651)">5</text>
                <text class="shade" transform="matrix(2.100 -1.400 1.070 2.640 702 985)">4</text>
                <text class="dg" transform="matrix(2.100 -1.400 1.070 2.640 698 988)">4</text>
              </g>
            </defs>
            <g class="ink" transform="translate(1270 620) scale(.4847 .4209)">
              <path d="M1276 254C1290 190 1350 125 1390 128C1412 134 1412 160 1408 180L1318 548 1200 425C1240 370 1275 310 1276 254z" fill="#8f914c"/>
              <path d="M1158 358C1180 310 1212 270 1222 205C1240 130 1300 70 1335 80L1390 127C1350 125 1290 190 1276 254C1275 310 1240 370 1200 425z" fill="url(#lever)"/>
              <path d="M1222 205L1276 254" fill="none"/>
              <path d="M488 1358C540 1425 590 1462 655 1445L580 1310z" fill="#0a2a66"/>
              <path d="M780 47L1510 734 715 1286 52 423z" fill="#0a99d0"/>
              <path d="M52 423L715 1286 698 1505 565 1323 458 1375 205 868 185 800 83 664z" fill="#0a4f68"/>
              <path d="M715 1286L1510 734 1436 971 698 1505z" fill="#0a6c92"/>
              <path d="M180 491L821 152 1349 655 663 1108z" fill="#0a4f68"/>
              <path d="M195 503L825 172 800 200 300 460 230 545z" fill="#101a20" stroke="none"/>
              <path d="M180 491L821 152 825 168 195 503z" fill="#0a99d0"/>
              <use href="#wheel" transform="matrix(1 0 0 .917 409 -188)"/>
              <use href="#wheel" transform="matrix(1 0 0 .962 207 -98)"/>
              <use href="#wheel"/>
              <path d="M230 550C330 530 450 680 520 800C580 900 610 1000 612 1037z" fill="#0a2a66"/>
              <path d="M232 550C260 508 350 505 420 560C540 660 640 850 697 1082L663 1108 612 1037C570 930 530 800 450 700C390 610 320 545 232 550z" fill="url(#rim)"/>
              <path d="M663 1108L1349 655 1400 680 715 1150z" fill="#0a99d0" stroke="none"/>
              <path d="M663 1108L1349 655" fill="none"/>
              <path d="M235 835L370 1018 443 1265 403 1290 410 1395 400 1413C350 1390 300 1300 272 1235L186 905z" fill="#6a0a0c"/>
              <path d="M235 835L286 803 422 988 370 1018z" fill="#d00b0d"/>
              <path d="M370 1018L422 988 496 1230 443 1265z" fill="#e30a0c"/>
              <path d="M403 1290L455 1262 457 1374 400 1413 410 1392z" fill="#960a0d"/>
              <path d="M410 1392L457 1360" fill="none"/>
              <path d="M240 985L272 955 290 975z" fill="#2a1010"/>
              <path d="M293 1225L348 1195 355 1315z" fill="#e30a0c"/>
              <path d="M340 1180L358 1170 355 1195 345 1197z" fill="#0a99d0"/>
              <path d="M138 1053L278 968C300 990 325 1020 337 1050L197 1137z" fill="#cfd06b"/>
              <path d="M197 1137L337 1050 372 1162 231 1247z" fill="#e2e275"/>
              <path d="M120 1078L138 1053 197 1137 231 1247 207 1262 162 1195 160 1170 145 1145z" fill="#6b6b37"/>
              <path d="M207 1262L193 1160 147 1090 160 1170" fill="none"/>
            </g>
            <g class="ink" transform="translate(1000 930) scale(.3333 .3444)">
              <path d="M430 105L465 85C480 65 520 80 550 120C700 250 900 600 1000 820C1080 990 1130 1100 1140 1160L1141 1215C1130 1252 1095 1245 1065 1220L900 800z" fill="#90a4e0"/>
              <path d="M755 530L825 628 907 812M1065 1195L1140 1155" fill="none"/>
              <path d="M88 200L368 72 440 105 475 160 510 185 650 375 700 465 755 543 907 820 935 893 988 993 1070 1220 1083 1283 1063 1335 803 1493 770 1465 688 1368 640 1295 500 1090 400 925 290 700 150 405 120 330 85 220z" fill="#222"/>
              <path d="M88 200L368 72 440 105 155 235z" fill="#1e1e1e"/>
              <path d="M190 180C230 120 330 110 350 125C330 170 230 190 190 195zM230 165C250 135 300 130 320 135C300 165 250 175 230 165z" fill="#262626"/>
              <path d="M155 235L440 105C460 125 470 140 475 160L185 297C180 270 170 250 155 235z" fill="url(#cylB)"/>
              <path d="M185 297L490 160 510 182 210 317z" fill="#2e2e2e"/>
              <path d="M210 317L510 182 650 375 347 520z" fill="#383838"/>
              <path d="M347 520L650 375C680 410 695 440 700 468L402 620C390 580 370 550 347 520z" fill="url(#cylA)"/>
              <path d="M402 620L700 468C725 490 745 520 755 543L450 697C440 670 420 640 402 620z" fill="url(#cylB)"/>
              <path d="M450 697L755 543 907 820 607 980z" fill="#454545"/>
              <path d="M607 980L907 820C930 850 937 870 935 893L637 1055C630 1020 620 1000 607 980z" fill="url(#cylA)"/>
              <path d="M637 1055L935 893C960 920 975 950 988 993L692 1155C675 1110 660 1080 637 1055z" fill="url(#cylB)"/>
              <path d="M692 1155L988 993 1065 1195 787 1360z" fill="#383838"/>
              <path d="M787 1360L1065 1195 1070 1225 790 1383z" fill="#2c2c2c"/>
              <path d="M790 1383L1060 1228C1080 1255 1084 1270 1083 1283L808 1440z" fill="#3a3a3a"/>
              <path d="M808 1440L1083 1283 1063 1335 803 1493z" fill="#1c1c1c"/>
              <path d="M875 1435L980 1350 1000 1345 975 1385z" fill="#444"/>
              <path d="M295 590C340 590 570 960 585 1105C560 1090 545 1075 535 1050L565 1135C500 1060 450 930 370 790C320 700 290 620 295 590z" fill="#383838"/>
              <path d="M450 922L495 900M487 1002L540 978M535 1052L560 1040" fill="none"/>
              <text class="shade" transform="matrix(3.500 -1.600 1.300 2.700 340 507)">7</text>
              <text class="dg dim" transform="matrix(3.500 -1.600 1.300 2.700 347 515)">7</text>
              <text class="shade" transform="matrix(3.300 -1.500 1.300 3.600 632 933)">6</text>
              <text class="dg" transform="matrix(3.300 -1.500 1.300 3.600 632 933)">6</text>
              <text class="shade" transform="matrix(3.700 -1.800 .37 2.800 787 1338)">5</text>
              <text class="dg dim" transform="matrix(3.700 -1.800 .37 2.800 780 1326)">5</text>
            </g>
            <g transform="translate(1840 240) scale(.3333)">
              <g fill="#c8cbea">
                <path d="M472 183L540 251H405zM472 947L405 879H540zM90 565L159 497V633zM855 565L786 497V633z"/>
                <circle cx="820" cy="217" r="35"/>
                <path d="M361 224L375 266C330 280 285 305 250 344L264 358 188 386 202 297 217 311C260 268 310 237 361 224z"/>
                <path d="M584 224L570 266C615 280 660 305 695 344L681 358 758 386 743 297 728 311C685 268 635 237 584 224z"/>
              </g>
              <path d="M502 338L667 472 690 480 694 528 646 678 465 798 411 790 300 626 257 475 288 428z" fill="#e3e8f9"/>
              <path d="M502 338L667 472 433 600 288 428z" fill="#e7ecfc"/>
              <path d="M667 472L690 480 694 528z" fill="#c4cbe8"/><path d="M257 475L288 428 268 440z" fill="#c4cbe8"/>
              <g fill="none" stroke="#222" stroke-width="3"><path d="M667 472L502 338 288 428 433 600zM433 600L463 664 694 530 667 472M463 664L465 798 646 678 694 530M433 600L393 655 463 664M393 655L411 790 300 626 257 475 393 655"/></g>
              <path d="M433 600L463 664 393 655z" fill="#dfe3f5" stroke="#778" stroke-width="5"/>
              <path d="M201 402L437 312" stroke="#00f" stroke-width="5"/><path d="M201 402L261 580" stroke="#0f0" stroke-width="5"/><path d="M201 402L335 583" stroke="#f00" stroke-width="5"/>
              <text class="cubetxt" transform="matrix(.58 .58 -1.400 .6 428 418)">FRONT</text>
              <text class="cubetxt pale" transform="matrix(-.2 .8 -1.600 .8 590 634)">RIGHT</text>
              <path d="M300 580L330 620M336 630L356 662M360 672L371 690" stroke="#c9cbd8" stroke-width="6"/>
              <path d="M604 823L664 803 722 823V899L664 919 604 899z" fill="#b4b6d2"/><path d="M604 823L664 803 722 823 664 841z" fill="#c8cbea"/><path d="M664 841L722 823V899L664 919z" fill="#c3c6e4"/>
              <path d="M743 843H813L778 878z" fill="#858399"/>
            </g>
            <g transform="translate(1500 1600) scale(.5357 .3333)">
              <path d="M1077 122L1125 82" stroke="#20207e" stroke-width="5"/><path d="M1135 72L1113 82 1125 100z" fill="#20207e"/>
              <path d="M1077 122V170" stroke="#1f7f1f" stroke-width="4"/><path d="M1070 165H1084L1077 190z" fill="#1f7f1f"/>
              <path d="M1077 122L1118 188" stroke="#802020" stroke-width="5"/><path d="M1130 216L1102 186 1122 170z" fill="#802020"/>
              <path d="M1152 308L1194 242M1167 308L1194 266M1182 308L1194 290" stroke="#555" stroke-width="4"/>
            </g>
            <g class="axis"><text x="2109" y="1623">z</text><text x="2105" y="1671">x</text><text x="2077" y="1662">y</text></g>
          </svg>
        </article>
        <article class="sheetwin">
          <div class="subtitle plain">
            <div class="lights idle"><i></i><i></i><i></i></div>
            <div class="name"><svg viewBox="0 0 30 24"><use href="#sheet"/></svg><span>Spreadsheet-config</span></div>
          </div>
          <div class="form"><label>Content:</label><div class="inp a"></div><label class="al">Alias:</label><div class="inp z"></div></div>
          <div class="table">
            <div class="tr th"><span></span><span>A</span><span>B</span><span>C</span><span></span></div>
            <div class="tr"><span>1</span><span class="black">Configuration PARAMs</span><span></span><span></span></div>
            <div class="tr"><span>2</span><span class="end">Ring DIGIT</span><span class="yel">7</span><span></span><span></span></div>
            <div class="tr"><span>3</span><span class="end">#DIGITS</span><span class="yel">3</span><span></span><span></span></div>
            <div class="tr"><span>4</span><span class="sel"></span><span></span><span></span><span></span></div>
            <div class="tr"><span>5</span><span></span><span></span><span></span><span></span></div>
            <div class="tr"><span>6</span><span></span><span></span><span></span><span></span></div>
            <div class="tr"><span>7</span><span></span><span></span><span></span><span></span></div>
            <div class="tr"><span>8</span><span></span><span></span><span></span><span></span></div>
            <div class="tr"><span>9</span><span></span><span></span><span></span><span></span></div>
            <div class="tr"><span>10</span><span></span><span></span><span></span><span></span></div>
            <div class="tr"><span>11</span><span></span><span></span><span></span><span></span></div>
            <div class="tr"><span>12</span><span></span><span></span><span></span><span></span></div>
            <div class="tr"><span>13</span><span></span><span></span><span></span><span></span></div>
            <div class="tr"><span>14</span><span></span><span></span><span></span><span></span></div>
            <div class="tr"><span>15</span><span></span><span></span><span></span><span></span></div>
            <div class="tr"><span>16</span><span></span><span></span><span></span><span></span></div>
            <div class="tr"><span>17</span><span></span><span></span><span></span><span></span></div>
            <div class="tr"><span>18</span><span></span><span></span><span></span><span></span></div>
            <div class="tr"><span>19</span><span></span><span></span><span></span><span></span></div>
            <div class="tr"><span>20</span><span></span><span></span><span></span><span></span></div>
            <div class="tr last"><span>21</span><span></span><span></span><span></span><span></span></div>
          </div>
        </article>
      </div>
      <div class="mditabs">
        <div class="edge l"></div>
        <div class="tab on"><svg viewBox="0 0 18 18"><path d="M1 1l16 16M17 1L1 17" stroke="#fff" stroke-width="2"/></svg><span>combination-lock : 1</span></div>
        <div class="tab off2"><svg viewBox="0 0 18 18"><path d="M1 1l16 16M17 1L1 17" stroke="#555" stroke-width="2"/></svg><svg class="sh" viewBox="0 0 30 24"><use href="#sheet"/></svg><span>Spreadsheet-c...</span></div>
        <div class="edge r2"></div>
      </div>
    </section>

    <aside class="side">
      <span class="hgrip"></span>
      <b><svg><use href="#fitall"/></svg></b><b><svg><use href="#fitsel"/></svg></b><b class="dd"><svg><use href="#style"/></svg><svg class="chev"><use href="#chev"/></svg></b><b><svg><use href="#bsel"/></svg></b>
      <span class="hsep"></span>
      <b><svg><use href="#back"/></svg></b><b><svg><use href="#fwd"/></svg></b><b class="dd"><svg><use href="#linksel"/></svg><svg class="chev"><use href="#chev"/></svg></b>
      <span class="hsep"></span>
      <b class="dd hot"><svg><use href="#vsync"/></svg><svg class="chev"><use href="#chev"/></svg></b><b><svg><use href="#iso"/></svg></b>
      <span class="hsep"></span>
      <b><svg><use href="#vfront"/></svg></b><b><svg><use href="#vtop"/></svg></b><b><svg><use href="#vright"/></svg></b>
      <span class="hsep"></span>
      <b><svg><use href="#vrear"/></svg></b><b><svg><use href="#vbot"/></svg></b><b><svg><use href="#vleft"/></svg></b>
      <span class="hsep"></span>
      <b><svg><use href="#ruler"/></svg></b>
    </aside>
  </main>

  <footer class="status">
    <span class="msg">Preselected: combination_lock.Body004.Chamfer.Face6 (-15.928041 mm, -10.000000 mm, 17.250160 mm)</span>
    <span class="gesture"><svg><use href="#gest"/></svg>Gesture</span>
  </footer>
</div>
</body>
</html>
```
FILE: styles.css
```css
* { box-sizing: border-box; }
body {
  margin: 0;
  width: 3104px;
  height: 1978px;
  overflow: hidden;
  padding: 76px 112px;
  background: #fff;
  font-family: Inter, "Liberation Sans", sans-serif;
  font-size: 26px;
  letter-spacing: -0.18px;
  color: #000;
}
svg { display: block; flex: none; }
.defs { position: absolute; }
.window {
  width: 2880px;
  height: 1754px;
  display: flex;
  flex-direction: column;
  border-radius: 10px;
  overflow: hidden;
  background: #ececec;
  box-shadow: 0 0 0 1px rgba(0,0,0,.22), 0 36px 56px rgba(0,0,0,.42), 0 6px 30px rgba(0,0,0,.12);
}
.titlebar {
  height: 44px;
  flex: none;
  display: grid;
  grid-template-columns: 1fr auto 1fr;
  align-items: center;
  background: linear-gradient(#e9e9e9, #d0d0d0);
  border-bottom: 2px solid #aaa;
  border-top: 1px solid #f6f6f6;
}
.title { color: #4a4a4a; margin-top: 2px; }
.lights { display: flex; gap: 16px; padding-left: 16px; }
.lights i { width: 24px; height: 24px; border-radius: 50%; border: 1px solid rgba(0,0,0,.14); }
.lights .r { background: #fc615d; }
.lights .y { background: #fdbc40; }
.lights .g { background: #34c84a; }
.lights.idle { padding-left: 14px; }
.lights.idle i { background: #d0d0d0; border-color: #b4b4b4; }

.toolbar {
  flex: none;
  display: flex;
  align-items: center;
  background: linear-gradient(#ededed, #c9c9c9);
  border-top: 1px solid #fafafa;
  border-bottom: 3px solid #b0b0b0;
  padding-top: 2px;
}
.tb1 { height: 67px; padding-top: 3px; }
.tb2 { height: 56px; }
.toolbar b, .side b { display: flex; align-items: center; justify-content: center; flex: none; }
.toolbar b { width: 60px; height: 40px; }
.toolbar b svg, .side b svg { width: 31px; height: 31px; }
.toolbar b.dd { width: 78px; justify-content: flex-start; padding-left: 22px; }
.toolbar b .chev, .side b .chev { width: 10px; height: 8px; margin: 16px 0 0 6px; color: #222; }
.toolbar b.off .chev { color: #999; }
.sep {
  width: 20px;
  height: 56px;
  flex: none;
  background: repeating-linear-gradient(#777 0 2px, transparent 2px 6px) center / 2px 100% no-repeat;
}
.tb2 .sep { height: 44px; }
.grip {
  width: 20px;
  height: 36px;
  flex: none;
  background: radial-gradient(circle at 15px 6px, #999 2px, transparent 2.5px) 0 0 / 20px 12px;
}
.tb2 .grip { height: 24px; }
.grip.far { margin-left: 15px; }
.grip.tight { margin-left: -2px; }
.combo {
  width: 369px;
  height: 39px;
  margin: -4px 0 0 13px;
  display: flex;
  align-items: center;
  flex: none;
  background: #fff;
  border-radius: 8px;
  overflow: hidden;
  box-shadow: 0 0 0 1px #c4c4c4, 0 1px 2px rgba(0,0,0,.4);
  color: #222;
}
.combo .wb { width: 31px; height: 31px; margin-left: 18px; }
.combo span { margin-left: 8px; flex: 1; }
.step { width: 33px; height: 39px; background: linear-gradient(#69a6fb, #0568ff); }
.step svg { width: 33px; height: 39px; }

.main { flex: 1; min-height: 0; display: flex; background: #ececec; }
.dock { width: 798px; flex: none; display: flex; flex-direction: column; border-right: 2px solid #aaa; padding: 0 1px; }
.dock-title {
  height: 44px;
  flex: none;
  display: flex;
  align-items: center;
  background: linear-gradient(#eaeaea, #d8d8d8);
  border-bottom: 2px solid #bbb;
  font-size: 22px;
  letter-spacing: 0;
  color: #222;
}
.dk { width: 28px; height: 28px; margin: -3px 3px 0 3px; }
.dk + .dk { margin-left: 5px; }
.dock-title span { margin: 2px 0 0 296px; }
.pane {
  flex: 1;
  margin: 18px 0 3px;
  padding: 0 6px 0 4px;
  border: 1px solid #d6d6d6;
  border-radius: 8px;
  background: #e2e2e2;
  display: flex;
  flex-direction: column;
}
.tabs { display: flex; flex: none; height: 40px; }
.tabs span {
  display: flex;
  align-items: center;
  justify-content: center;
  background: #fff;
  color: #222;
  box-shadow: 0 1px 1px rgba(0,0,0,.35), 0 0 0 1px rgba(0,0,0,.1);
}
.tabs span:first-child { border-radius: 8px 0 0 8px; padding-right: 5px; }
.tabs span:last-child { border-radius: 0 8px 8px 0; padding-left: 5px; }
.tabs .on, .tab.on { background: linear-gradient(#6ba7fb, #0568ff); color: #fff; }
.tabs.top { margin: -17px 0 0 273px; }
.top span:first-child { width: 119px; }
.top span:last-child { width: 112px; padding-left: 6px; }
.tree { margin-top: 10px; height: 641px; flex: none; background: #fff; border: 1px solid #bbb; border-top: 2px solid #8e8e8e; }
.thead, .phead { display: flex; align-items: center; height: 35px; background: #ececec; font-size: 22px; letter-spacing: 0.04px; color: #222; }
.thead span, .phead span { height: 26px; line-height: 23px; }
.phead span { line-height: 21px; }
.thead .c1 { width: 455px; padding-left: 9px; border-right: 2px solid #bbb; }
.thead .c2 { width: 200px; padding-left: 9px; border-right: 2px solid #bbb; }
.row { height: 40px; display: flex; align-items: center; }
.row.app { height: 35px; padding-left: 12px; }
.row i { flex: none; margin-left: 55px; width: 16px; height: 18px; background: #8c8c8c; clip-path: polygon(0 0, 100% 50%, 0 100%); }
.row i.none { background: none; }
.row svg { width: 32px; height: 30px; margin-left: 20px; }
.row span { margin-left: 12px; }
.row.root { font-weight: 700; letter-spacing: 0.27px; }
.row.root i { margin-left: 14px; width: 18px; height: 15px; clip-path: polygon(0 0, 100% 0, 50% 100%); }
.row.root svg { margin-left: 19px; }
.split { height: 15px; flex: none; display: flex; justify-content: center; align-items: center; }
.split i { width: 12px; height: 12px; border-radius: 50%; background: #b8b8b8; border: 1px solid #a0a0a0; }
.propbox { flex: none; height: 724px; border: 1px solid #cfcfcf; border-radius: 8px; background: #dadada; padding: 5px 5px 30px; }
.props { height: 687px; background: #fff; border: 1px solid #b0b0b0; border-top: 2px solid #8e8e8e; }
.phead .c1 { width: 200px; padding-left: 9px; border-right: 2px solid #bbb; }
.phead .c2 { padding-left: 9px; flex: 1; border-right: 2px solid #bbb; }
.stripes { height: 649px; background: repeating-linear-gradient(#fff 0 42px, #f4f5f5 42px 84px); }
.tabs.bottom { margin: -19px 0 0 285px; position: relative; }
.bottom span:first-child { width: 105px; }
.bottom span:last-child { width: 100px; }

.mdi { width: 2008px; flex: none; display: flex; flex-direction: column; }
.subs { flex: 1; display: flex; min-height: 0; border-bottom: 3px solid #a4a4a4; height: 1463px; }
.view3d { width: 1230px; flex: none; border: 2px solid #e4e4e4; border-top: 0; display: flex; flex-direction: column; }
.subtitle {
  height: 45px;
  flex: none;
  display: grid;
  grid-template-columns: 1fr auto 1fr;
  align-items: center;
  background: linear-gradient(#ebebeb, #d6d6d6);
  border-top: 2px solid #c8c8c8;
  border-radius: 10px 10px 0 0;
}
.subtitle .lights { gap: 20px; }
.name { display: flex; align-items: center; gap: 11px; color: #222; padding-right: 44px; }
.name svg { width: 30px; height: 24px; }
.scene { width: 1226px; flex: 1; background: linear-gradient(#333366, #9797aa); }
.ink path, .ink text { stroke: #101010; stroke-width: 1.6px; vector-effect: non-scaling-stroke; stroke-linejoin: round; }
.ink path[stroke="none"] { stroke: none; }
.ink text { font: 100px "DejaVu Sans", sans-serif; letter-spacing: 0; }
.ink text.dg { fill: #f8f8f8; stroke: #f8f8f8; stroke-width: 2px; }
.ink text.dim { fill: #cfcfcf; stroke: #cfcfcf; stroke-width: 1.2px; }
.ink text.shade { fill: #1d1d1d; stroke-width: 5px; }
.cubetxt { font: 30px "Liberation Sans", sans-serif; letter-spacing: 5px; fill: #333; }
.pale { fill: #999; font-size: 20px; letter-spacing: 0; }
.axis { font: 14px "Liberation Sans", sans-serif; }

.sheetwin { flex: 1; min-width: 0; display: flex; flex-direction: column; border-left: 2px solid #bbb; border-right: 1px solid #f4f4f4; margin-left: -2px; }
.subtitle.plain { background: #ececec; }
.plain .name { padding-right: 26px; }
.form { height: 85px; flex: none; display: flex; align-items: center; padding: 5px 0 0 24px; }
.inp { height: 40px; border: 2px solid #bcbcbc; background: #fff; }
.form label { width: 123px; white-space: nowrap; }
.form .al { width: 81px; margin-left: 22px; }
.inp.a { width: 396px; }
.inp.z { flex: 1; border-right-width: 1px; }
.table { margin-left: 24px; height: 1303px; overflow: hidden; background: #fff; border: 1px solid #b0b0b0; border-top: 2px solid #8e8e8e; flex: none; }
.tr { display: grid; grid-template-columns: 101px 200px 200px 200px 1fr; height: 60px; }
.tr span { border-right: 1px solid #c8c8c8; border-bottom: 1px solid #c8c8c8; display: flex; align-items: center; justify-content: center; }
.tr span:last-child { border-right: 0; }
.tr span:first-child {
  justify-content: flex-start;
  padding-left: 9px;
  font-size: 22px;
  line-height: 20px;
  border: 0;
  background: linear-gradient(#b8b8b8, #b8b8b8) 5px 100% / 92px 2px no-repeat #ececec;
}
.tr.th { height: 60px; font-size: 22px; background: #ececec; }
.tr.th span { border-bottom: 0; border-right: 2px solid #bbb; height: 52px; margin-top: 4px; padding-bottom: 2px; }
.tr.th span:last-child { border-right: 0; }
.tr.th span:first-child { background: none; border-right: 2px solid #bbb; }
.tr.last { height: 42px; }
.tr.last span { border-bottom: 0; }
.tr.last span:first-child { background: #ececec; align-items: flex-end; padding-bottom: 3px; }
.tr .end { justify-content: flex-end; padding-right: 10px; }
.tr .yel { background: #ffff9e; }
.tr .sel { background: #dadada; }
.tr .black { grid-column: span 2; background: #000; color: #fff; font-weight: 700; letter-spacing: 0.35px; }

.mditabs { height: 42px; flex: none; display: flex; }
.edge { height: 19px; background: #e2e2e2; border-bottom: 1px solid #cfcfcf; }
.edge.l { width: 628px; margin-right: 5px; border-left: 1px solid #cfcfcf; }
.edge.r2 { flex: 1; margin-left: 7px; }
.tab { height: 40px; margin-top: 1px; display: flex; align-items: center; }
.tab svg { width: 17px; height: 17px; }
.tab.on { width: 333px; padding-left: 10px; border-radius: 8px 0 0 8px; }
.tab.on span { margin-left: 15px; }
.off2 { width: 407px; background: #fff; padding-left: 16px; border-radius: 0 8px 8px 0; box-shadow: 0 1px 1px rgba(0,0,0,.35), 0 0 0 1px rgba(0,0,0,.1); color: #222; }
.tab .sh { width: 30px; height: 24px; margin-left: 28px; }
.off2 span { margin-left: 15px; }

.side {
  flex: 1;
  display: flex;
  flex-direction: column;
  background: linear-gradient(90deg, #eee, #c9c9c9);
  border-left: 1px solid #fff;
  border-right: 2px solid #b4b4b4;
}
.side b { height: 60px; }
.side b.dd { justify-content: flex-start; padding-left: 20px; }
.side b .chev { margin-left: 6px; }
.side b.hot { height: 52px; margin: 4px 1px 4px 2px; padding-left: 18px; background: linear-gradient(90deg, #ccc, #b2b2b2); border-radius: 8px 8px 0 0; }
.hgrip { height: 20px; flex: none; margin-right: 15px; padding-left: 9px; background: radial-gradient(circle at 6px 17px, #999 2px, transparent 2.5px) 9px 0 / 12px 20px repeat-x; background-clip: content-box; }
.hsep { height: 20px; flex: none; background: repeating-linear-gradient(90deg, #777 0 2px, transparent 2px 6px) center / 62px 2px no-repeat; }

.status {
  height: 82px;
  flex: none;
  display: flex;
  align-items: center;
  border-top: 2px solid #777;
  background: linear-gradient(#eaeaea, #b2b2b2);
  padding: 0 0 2px 5px;
}
.msg { width: 2419px; white-space: nowrap; letter-spacing: 0.02px; }
.gesture { display: flex; align-items: center; }
.gesture svg { width: 30px; height: 30px; margin-right: 14px; }
```
